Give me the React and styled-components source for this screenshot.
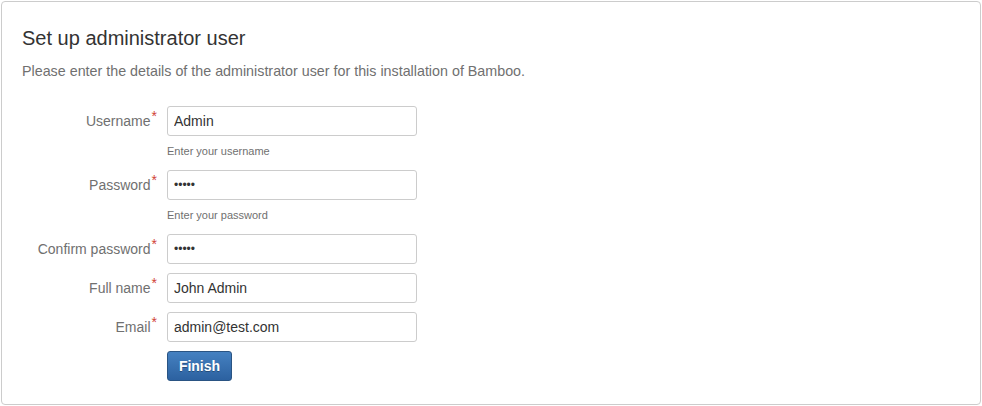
import React from 'react';
import styled, { createGlobalStyle } from 'styled-components';

const GlobalStyle = createGlobalStyle`
  body {
    margin: 0;
    background: #fff;
    font-family: Arial, 'Liberation Sans', sans-serif;
  }
`;

const fields = [
  { label: 'Username', value: 'Admin', help: 'Enter your username' },
  { label: 'Password', value: '•••••', password: true, help: 'Enter your password' },
  { label: 'Confirm password', value: '•••••', password: true },
  { label: 'Full name', value: 'John Admin' },
  { label: 'Email', value: 'admin@test.com' },
];

const App = () => (
  <>
    <GlobalStyle />
    <Panel>
      <Title>Set up administrator user</Title>
      <Intro>Please enter the details of the administrator user for this installation of Bamboo.</Intro>
      <Form onSubmit={(e) => e.preventDefault()}>
        {fields.map((f) => (
          <Row key={f.label}>
            <Label>
              {f.label}
              <Required>*</Required>
            </Label>
            <div>
              <Input defaultValue={f.value} $password={f.password} readOnly />
              {f.help && <Help>{f.help}</Help>}
            </div>
          </Row>
        ))}
        <Row>
          <span />
          <div>
            <Button type="submit">Finish</Button>
          </div>
        </Row>
      </Form>
    </Panel>
  </>
);

const Panel = styled.div`
  margin: 1px;
  height: 404px;
  box-sizing: border-box;
  border: 1px solid #cccccc;
  border-radius: 4px;
  padding: 23px 20px 0;
`;

const Title = styled.h2`
  margin: 0;
  font-size: 20px;
  font-weight: normal;
  line-height: 26px;
  color: #333;
`;

const Intro = styled.p`
  margin: 10px 0 0;
  font-size: 14.3px;
  line-height: 20px;
  color: #707070;
`;

const Form = styled.form`
  margin-top: 25px;
  display: flex;
  flex-direction: column;
  gap: 9px;
`;

const Row = styled.div`
  display: grid;
  grid-template-columns: 135px 250px;
  column-gap: 10px;
  align-items: start;
`;

const Label = styled.label`
  text-align: right;
  font-size: 14px;
  line-height: 20px;
  padding-top: 5px;
  color: #707070;
`;

const Required = styled.span`
  color: #d04437;
  font-size: 14px;
  position: relative;
  top: -5px;
  margin-left: 1px;
`;

const Input = styled.input`
  display: block;
  box-sizing: border-box;
  width: 250px;
  height: 30px;
  padding: 4px 6px;
  border: 1px solid #cccccc;
  border-radius: 3px;
  font-family: Arial, 'Liberation Sans', sans-serif;
  font-size: ${(p) => (p.$password ? '12px' : '14px')};
  color: #333;
  background: #fff;
  outline: none;
`;

const Help = styled.div`
  font-size: 11px;
  line-height: 14px;
  color: #707070;
  margin: 8px 0 3px;
`;

const Button = styled.button`
  box-sizing: border-box;
  width: 65px;
  height: 30px;
  border: 1px solid #2a5483;
  border-radius: 3px;
  background: linear-gradient(to bottom, #4581c1, #2c61a0);
  color: #fff;
  text-shadow: 0 1px 0 rgba(0, 0, 0, 0.3);
  font-family: Arial, 'Liberation Sans', sans-serif;
  font-weight: bold;
  font-size: 14px;
  cursor: pointer;
`;

export default App;
